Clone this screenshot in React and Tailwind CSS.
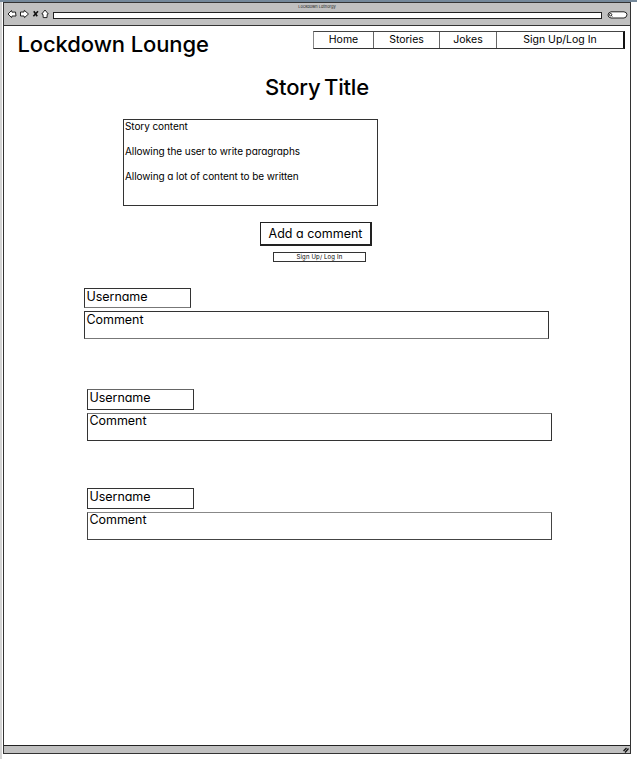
const BackArrow = () => (
  <svg className="h-[10px] w-[11px] shrink-0" viewBox="0 0 11 10" fill="#fff" stroke="#222" strokeWidth="1">
    <path d="M1 5 L4.5 1.5 L5 3.2 L8.5 3 L9 7 L5 7 L4.6 8.6 Z" />
  </svg>
);

const ForwardArrow = () => (
  <svg className="h-[10px] w-[11px] shrink-0" viewBox="0 0 11 10" fill="#fff" stroke="#222" strokeWidth="1">
    <path d="M1.5 3 L5 3 L5.3 1.3 L9.5 5 L5.5 8.6 L5 7 L1.5 7 Z" />
  </svg>
);

const StopIcon = () => (
  <svg className="h-[10px] w-[7px] shrink-0" viewBox="0 0 7 10" fill="none" stroke="#111" strokeWidth="1.6">
    <path d="M1.8 2.2 L5.2 7.2 M6 2.2 L1.4 7.2" />
  </svg>
);

const HomeIcon = () => (
  <svg className="h-[10px] w-[8px] shrink-0" viewBox="0 0 8 10" fill="#fff" stroke="#222" strokeWidth="1">
    <path d="M4 1 L7.3 5 L6.2 5.4 L6 8.6 L2.2 8.6 L2 5.4 L0.8 5 Z" />
  </svg>
);

const SearchPill = () => (
  <svg className="h-[8px] w-[21px] shrink-0" viewBox="0 0 21 8" fill="none" stroke="#222" strokeWidth="1">
    <path fill="#fff" d="M4 0.8 H17 Q20 1.2 20 3.8 Q19.5 6.8 17 7 H4 Q1 6.5 1 4 Q1 1.5 4 0.8 Z" />
    <circle cx="3.6" cy="3.7" r="1.2" />
    <path d="M4.4 4.6 L5.4 5.4" />
  </svg>
);

const ResizeGrip = () => (
  <svg className="h-[6px] w-[6px]" viewBox="0 0 6 6" fill="none" stroke="#111" strokeWidth="1.3">
    <path d="M0.5 4 L3.5 1 M2 5.5 L5.5 1.5" />
  </svg>
);

const CommentBlock = ({ className, fieldClass, bodyClass }) => (
  <section className={className}>
    <div className={`w-[107px] border pl-[1.5px] text-[12.5px] leading-[16px] tracking-[-0.05px] ${fieldClass}`}>
      Username
    </div>
    <div className={`mt-[3px] h-[28px] w-[465px] border pl-[1.5px] text-[12.5px] tracking-[-0.05px] ${bodyClass}`}>
      Comment
    </div>
  </section>
);

export default function App() {
  return (
    <div className="h-[759px] w-[637px] overflow-hidden border-t-2 border-[#74889a] bg-white pl-[3px] font-['Inter','Liberation_Sans',sans-serif] text-black [font-feature-settings:'cv11'] shadow-[inset_2px_0_0_#d4d4d4]">
      <div className="flex h-[752px] w-[628px] flex-col border border-[#333] bg-white">
        <header className="h-[23px] shrink-0 border-b border-[#333] bg-[#c0c0c0]">
          <div className="h-[7px] text-center text-[4px] leading-[8px] text-[#222]">Lockdown Lathorgy</div>
          <div className="flex h-[8px] items-center pl-[3px]">
            <BackArrow />
            <span className="w-[1px]" />
            <ForwardArrow />
            <span className="w-[2px]" />
            <StopIcon />
            <span className="w-[2px]" />
            <HomeIcon />
            <div className="ml-[4px] mt-[3px] h-[7px] w-[549px] shrink-0 border border-[#222] bg-white" />
            <div className="ml-[5px] mt-[2px] flex"><SearchPill /></div>
          </div>
        </header>

        <div className="flex h-[33px] items-start justify-between pl-[13.5px] pr-[5px]">
          <h1 className="mt-[3px] whitespace-nowrap text-[22px] font-medium leading-[31px] tracking-[-0.1px]">Lockdown Lounge</h1>
          <nav className="mt-[5px] flex h-[18px] w-[312px] border border-r-2 border-b-[#333] border-l-[#888] border-r-[#111] border-t-[#444] text-center text-[10.5px] leading-[15px]">
            <a className="w-[60px] border-r border-[#666]">Home</a>
            <a className="w-[66px] border-r border-[#666]">Stories</a>
            <a className="w-[57px] border-r border-[#666]">Jokes</a>
            <a className="flex-1">Sign Up/Log In</a>
          </nav>
        </div>

        <main>
          <h2 className="mt-[12px] text-center text-[22px] font-medium leading-[33px] tracking-[-0.2px] [word-spacing:-2px]">Story Title</h2>
          <div className="ml-[119px] mt-[15px] h-[87px] w-[255px] border border-[#333] pl-[1px] text-[10px] leading-[12.5px] tracking-[-0.08px]">
            <p>Story content</p>
            <p className="mt-[12.5px]">Allowing the user to write paragraphs</p>
            <p className="mt-[12.5px]">Allowing a lot of content to be written</p>
          </div>
          <button className="ml-[256px] mt-[16px] block h-[24px] w-[112px] whitespace-nowrap border border-b-2 border-r-2 border-[#222] text-[12.5px] leading-[21px]">
            Add a comment
          </button>
          <button className="ml-[269px] mt-[6px] block h-[10px] w-[93px] border border-[#333] text-[6px] leading-[8px] tracking-[0.15px]">
            Sign Up/ Log In
          </button>
          <CommentBlock
            className="ml-[80px] mt-[26px]"
            fieldClass="h-[20px] border-[#333] border-b-[#777]"
            bodyClass="leading-[15px] border-[#333] border-b-[#777]"
          />
          <CommentBlock
            className="ml-[83px] mt-[50px]"
            fieldClass="h-[21px] border-[#333] border-t-[#666]"
            bodyClass="leading-[13px] border-[#333] border-t-[#777]"
          />
          <CommentBlock
            className="ml-[83px] mt-[47px]"
            fieldClass="h-[21px] border-[#333]"
            bodyClass="leading-[13px] border-[#444] border-t-[#888]"
          />
        </main>

        <footer className="mt-auto flex h-[8px] shrink-0 items-center justify-end border-t border-[#222] bg-[#c0c0c0] pr-[1px]">
          <ResizeGrip />
        </footer>
      </div>
    </div>
  );
}
